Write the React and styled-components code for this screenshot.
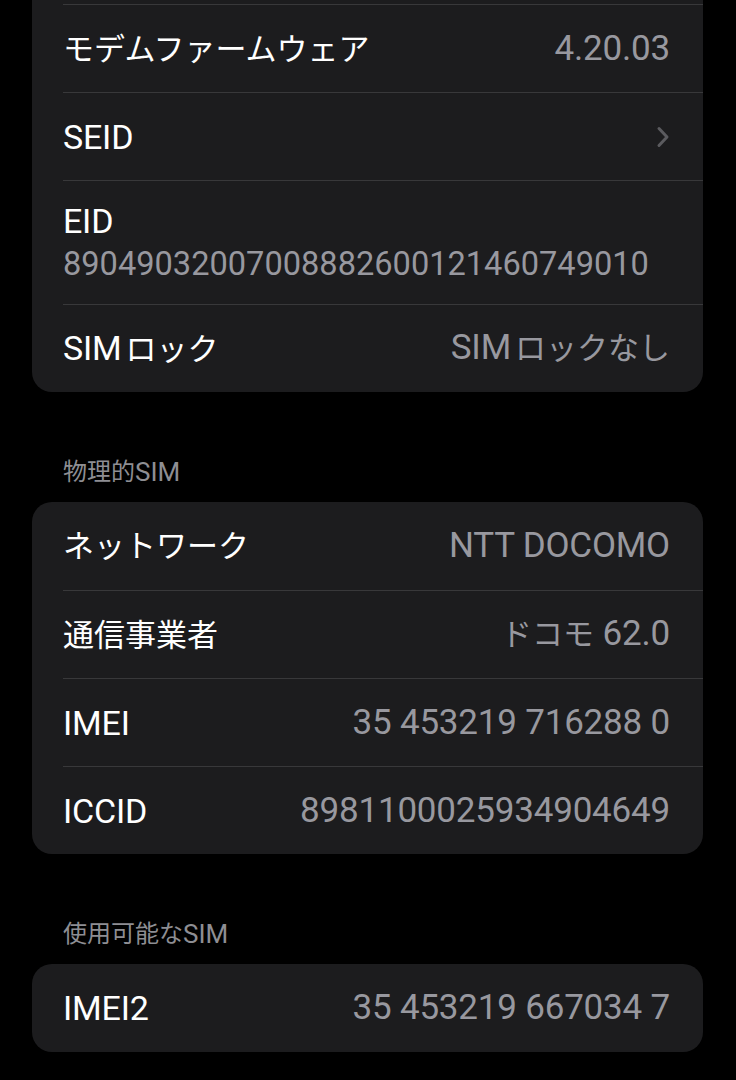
import React from "react";
import styled, { createGlobalStyle } from "styled-components";

const GlobalStyle = createGlobalStyle`
  html, body { margin: 0; padding: 0; background: #000; }
  body { font-family: Roboto, "Noto Sans CJK JP", sans-serif; -webkit-font-smoothing: antialiased; }
`;

const Page = styled.div`
  width: 736px;
  height: 1080px;
  overflow: hidden;
  background: #000;
  display: flex;
  flex-direction: column;
  padding: 0 33px 0 32px;
  box-sizing: border-box;
`;

const Card = styled.div`
  background: #1c1c1e;
  border-radius: ${(p) => (p.$continued ? "0 0 20px 20px" : "20px")};
  padding-top: ${(p) => (p.$continued ? "4px" : "0")};
  display: flex;
  flex-direction: column;
  flex-shrink: 0;
`;

const Row = styled.div`
  display: flex;
  align-items: center;
  justify-content: space-between;
  height: 88px;
  margin-left: 31px;
  padding-right: 33px;
  box-sizing: border-box;
  border-top: ${(p) => (p.$sep ? "1px solid #38383a" : "none")};
`;

const StackRow = styled.div`
  display: flex;
  flex-direction: column;
  justify-content: center;
  height: 124px;
  box-sizing: border-box;
  margin-left: 31px;
  border-top: 1px solid #38383a;
  gap: 3px;
`;

const Label = styled.span`
  color: #ffffff;
  font-size: 34px;
  line-height: 40px;
  font-family: Roboto, "Noto Sans CJK JP", sans-serif;
  letter-spacing: -0.2px;
  white-space: nowrap;
`;

const Value = styled.span`
  color: #98989f;
  font-size: 35px;
  line-height: 40px;
  font-family: Roboto, "Noto Sans CJK JP", sans-serif;
  letter-spacing: -0.2px;
  white-space: nowrap;
`;

const SubValue = styled(Value)`
  font-size: 32.6px;
  letter-spacing: 0;
`;

const Jp = styled.span`
  font-size: ${(p) => p.$size || 31}px;
  letter-spacing: 0;
  margin-left: ${(p) => p.$gap || 0}px;
`;

const SectionHeader = styled.div`
  display: flex;
  align-items: center;
  height: 28px;
  color: #8e8e93;
  font-size: 26px;
  line-height: 28px;
  font-family: Roboto, "Noto Sans CJK JP", sans-serif;
  padding: 0 0 0 31px;
  margin: 66px 0 16px;
  white-space: nowrap;
  flex-shrink: 0;
`;

const Chevron = () => (
  <svg width="14" height="22" viewBox="0 0 14 22" fill="none">
    <path d="M3 2.5 L11 11 L3 19.5" stroke="#5b5b5f" strokeWidth="3" strokeLinecap="round" strokeLinejoin="round" />
  </svg>
);

export default function App() {
  return (
    <>
      <GlobalStyle />
      <Page>
        <Card $continued>
          <Row $sep>
            <Label><Jp>モデムファームウェア</Jp></Label>
            <Value>4.20.03</Value>
          </Row>
          <Row $sep>
            <Label>SEID</Label>
            <Chevron />
          </Row>
          <StackRow>
            <Label>EID</Label>
            <SubValue>89049032007008882600121460749010</SubValue>
          </StackRow>
          <Row $sep>
            <Label>SIM<Jp $gap={4}>ロック</Jp></Label>
            <Value>SIM<Jp $gap={4}>ロックなし</Jp></Value>
          </Row>
        </Card>

        <SectionHeader><Jp $size={24}>物理的</Jp>SIM</SectionHeader>
        <Card>
          <Row>
            <Label><Jp>ネットワーク</Jp></Label>
            <Value>NTT DOCOMO</Value>
          </Row>
          <Row $sep>
            <Label><Jp>通信事業者</Jp></Label>
            <Value><Jp>ドコモ</Jp> 62.0</Value>
          </Row>
          <Row $sep>
            <Label>IMEI</Label>
            <Value>35 453219 716288 0</Value>
          </Row>
          <Row $sep>
            <Label>ICCID</Label>
            <Value>8981100025934904649</Value>
          </Row>
        </Card>

        <SectionHeader><Jp $size={24}>使用可能な</Jp>SIM</SectionHeader>
        <Card>
          <Row>
            <Label>IMEI2</Label>
            <Value>35 453219 667034 7</Value>
          </Row>
        </Card>
      </Page>
    </>
  );
}
